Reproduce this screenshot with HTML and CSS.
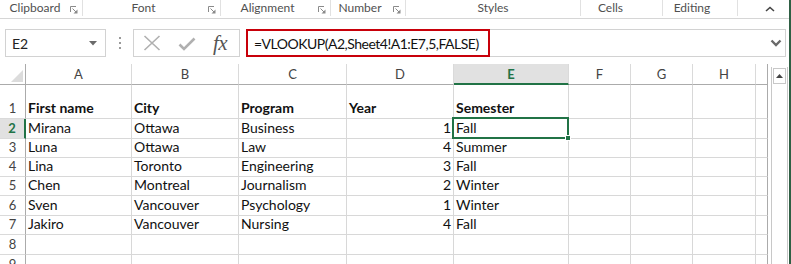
FILE: index.html
```html
<!DOCTYPE html>
<html>
<head>
<meta charset="utf-8">
<link rel="stylesheet" href="styles.css">
</head>
<body>
<div class="app">
  <div class="main">
    <div class="ribbon">
      <div class="grp g-clip"><span class="lbl">Clipboard</span><span class="launch"><svg width="8" height="8" viewBox="0 0 8 8"><path d="M0.5 6V0.5H6" fill="none" stroke="#8a8a8a"/><path d="M2.5 2.5L6 6" stroke="#8a8a8a"/><path d="M7.5 3.5V7.5H3.5Z" fill="#8a8a8a"/></svg></span></div>
      <div class="grp g-font"><span class="lbl">Font</span><span class="launch"><svg width="8" height="8" viewBox="0 0 8 8"><path d="M0.5 6V0.5H6" fill="none" stroke="#8a8a8a"/><path d="M2.5 2.5L6 6" stroke="#8a8a8a"/><path d="M7.5 3.5V7.5H3.5Z" fill="#8a8a8a"/></svg></span></div>
      <div class="grp g-align"><span class="lbl">Alignment</span><span class="launch"><svg width="8" height="8" viewBox="0 0 8 8"><path d="M0.5 6V0.5H6" fill="none" stroke="#8a8a8a"/><path d="M2.5 2.5L6 6" stroke="#8a8a8a"/><path d="M7.5 3.5V7.5H3.5Z" fill="#8a8a8a"/></svg></span></div>
      <div class="grp g-num"><span class="lbl">Number</span><span class="launch"><svg width="8" height="8" viewBox="0 0 8 8"><path d="M0.5 6V0.5H6" fill="none" stroke="#8a8a8a"/><path d="M2.5 2.5L6 6" stroke="#8a8a8a"/><path d="M7.5 3.5V7.5H3.5Z" fill="#8a8a8a"/></svg></span></div>
      <div class="grp g-styles"><span class="lbl">Styles</span></div>
      <div class="grp g-cells"><span class="lbl">Cells</span></div>
      <div class="grp g-edit"><span class="lbl">Editing</span></div>
      <div class="grp g-rest"><svg class="caret" width="10" height="6" viewBox="0 0 10 6"><path d="M1 5L5 1.5L9 5" fill="none" stroke="#444" stroke-width="1.6"/></svg></div>
    </div>

    <div class="fbar">
      <div class="namebox"><span class="nb-text">E2</span><svg class="nb-arrow" width="8" height="5" viewBox="0 0 8 5"><path d="M0 0H8L4 4.5Z" fill="#6a6a6a"/></svg></div>
      <div class="dots"><i></i><i></i><i></i></div>
      <div class="btns">
        <svg class="ic-x" width="18" height="16" viewBox="0 0 18 16"><path d="M1.5 1L16.5 15M16.5 1L1.5 15" stroke="#b0b0b0" stroke-width="1.6" fill="none"/></svg>
        <svg class="ic-ok" width="18" height="14" viewBox="0 0 18 14"><path d="M1.5 7.5L6 12L16.5 1.5" stroke="#b0b0b0" stroke-width="2.6" fill="none"/></svg>
        <span class="fx">fx</span>
      </div>
      <div class="finput">
        <div class="formula">=VLOOKUP(A2,Sheet4!A1:E7,5,FALSE)</div>
        <svg class="chev" width="12" height="8" viewBox="0 0 12 8"><path d="M1.5 1.5L6 6L10.5 1.5" fill="none" stroke="#6a6a6a" stroke-width="2.4"/></svg>
      </div>
    </div>

    <div class="sheet">
      <div class="grid">
        <div class="corner"><svg width="12" height="12" viewBox="0 0 12 12"><path d="M12 0V12H0Z" fill="#dcdcdc"/></svg></div>
        <div class="ch">A</div><div class="ch">B</div><div class="ch">C</div><div class="ch">D</div><div class="ch sel">E</div><div class="ch">F</div><div class="ch">G</div><div class="ch">H</div><div class="ch last"></div>

        <div class="rh">1</div><div class="c b">First name</div><div class="c b">City</div><div class="c b">Program</div><div class="c b">Year</div><div class="c b">Semester</div><div class="c"></div><div class="c"></div><div class="c"></div><div class="c"></div>

        <div class="rh sel">2</div><div class="c">Mirana</div><div class="c">Ottawa</div><div class="c">Business</div><div class="c n">1</div><div class="c active">Fall<span class="selbox"><span class="handle"></span></span></div><div class="c"></div><div class="c"></div><div class="c"></div><div class="c"></div>

        <div class="rh">3</div><div class="c">Luna</div><div class="c">Ottawa</div><div class="c">Law</div><div class="c n">4</div><div class="c">Summer</div><div class="c"></div><div class="c"></div><div class="c"></div><div class="c"></div>

        <div class="rh">4</div><div class="c">Lina</div><div class="c">Toronto</div><div class="c">Engineering</div><div class="c n">3</div><div class="c">Fall</div><div class="c"></div><div class="c"></div><div class="c"></div><div class="c"></div>

        <div class="rh">5</div><div class="c">Chen</div><div class="c">Montreal</div><div class="c">Journalism</div><div class="c n">2</div><div class="c">Winter</div><div class="c"></div><div class="c"></div><div class="c"></div><div class="c"></div>

        <div class="rh">6</div><div class="c">Sven</div><div class="c">Vancouver</div><div class="c">Psychology</div><div class="c n">1</div><div class="c">Winter</div><div class="c"></div><div class="c"></div><div class="c"></div><div class="c"></div>

        <div class="rh">7</div><div class="c">Jakiro</div><div class="c">Vancouver</div><div class="c">Nursing</div><div class="c n">4</div><div class="c">Fall</div><div class="c"></div><div class="c"></div><div class="c"></div><div class="c"></div>

        <div class="rh">8</div><div class="c"></div><div class="c"></div><div class="c"></div><div class="c"></div><div class="c"></div><div class="c"></div><div class="c"></div><div class="c"></div><div class="c"></div>

        <div class="rh">9</div><div class="c"></div><div class="c"></div><div class="c"></div><div class="c"></div><div class="c"></div><div class="c"></div><div class="c"></div><div class="c"></div><div class="c"></div>
      </div>
      <div class="vscroll">
        <div class="vs-track">
          <div class="vs-up"><svg width="7" height="4" viewBox="0 0 7 4"><path d="M0 4L3.5 0L7 4Z" fill="#444"/></svg></div>
        </div>
      </div>
    </div>
  </div>
  <div class="edge"></div>
</div>
</body>
</html>
```

FILE: styles.css
```css
* { box-sizing: border-box; }
html, body { margin: 0; padding: 0; background: #fff; }
body { width: 791px; height: 264px; overflow: hidden; font-family: Lato, "Open Sans", sans-serif; }

.app { display: flex; width: 791px; height: 264px; }
.main { width: 789px; display: flex; flex-direction: column; }
.edge { width: 2px; background: #2f5f44; }

/* ribbon group labels */
.ribbon { display: flex; height: 19px; border-bottom: 1px solid #d6d6d6; }
.grp { display: flex; height: 16px; border-right: 1px solid #e1e1e1; align-items: flex-start; }
.lbl { flex: 1; text-align: center; font-size: 12px; line-height: 16px; color: #505050; }
.launch { width: 16px; height: 16px; display: flex; align-items: center; justify-content: center; padding-top: 3px; }
.g-clip { width: 83px; padding-left: 4px; }
.g-font { width: 138px; }
.g-align { width: 110px; }
.g-num { width: 75px; }
.g-styles { width: 175px; }
.g-cells { width: 82px; padding-right: 22px; }
.g-edit { width: 75px; padding-right: 16px; }
.g-rest { flex: 1; border-right: none; justify-content: flex-end; padding-right: 14px; }
.caret { margin-top: 6px; }

/* formula bar */
.fbar { display: flex; align-items: stretch; height: 28px; margin-top: 10px; padding-left: 5px; }
.namebox { width: 101px; border: 1px solid #d2d2d2; display: flex; align-items: center; justify-content: space-between; padding: 0 8px 0 6px; }
.nb-text { font-size: 14px; color: #222; }
.nb-arrow { margin-top: 1px; }
.dots { width: 27px; display: flex; flex-direction: column; align-items: center; justify-content: center; gap: 3px; }
.dots i { display: block; width: 2px; height: 2px; background: #9a9a9a; }
.btns { width: 107px; border: 1px solid #d2d2d2; display: flex; align-items: center; padding-left: 9px; }
.ic-x { margin-right: 17px; }
.ic-ok { margin-right: 17px; margin-top: 1px; }
.fx { font-family: "Liberation Serif", serif; font-style: italic; font-size: 21px; color: #555; letter-spacing: -0.5px; line-height: 20px; }
.finput { width: 540px; margin-left: 6px; border: 1px solid #d2d2d2; display: flex; align-items: stretch; justify-content: space-between; }
.formula { width: 244px; margin: -1px 0 -1px -1px; border: 2px solid #c8000a; font-size: 14px; letter-spacing: -0.5px; color: #111; padding-left: 6px; display: flex; align-items: center; }
.chev { align-self: center; margin-right: 3px; }

/* sheet */
.sheet { display: flex; margin-top: 7px; flex: 1; min-height: 0; }
.grid {
  width: 768px;
  display: grid;
  grid-template-columns: 26px 106px 107px 108px 107px 115px 62px 62px 63px 12px;
  grid-template-rows: 21px 34px 20px 19px 19px 19px 20px 19px 20px 20px;
  align-content: start;
}
.corner { border-right: 1px solid #ababab; border-bottom: 1px solid #ababab; display: flex; align-items: flex-end; justify-content: flex-end; padding: 0 2px 2px 0; }
.ch { border-right: 1px solid #dadada; border-bottom: 1px solid #ababab; font-size: 13px; color: #444; text-align: center; line-height: 20px; }
.ch.last { border-right: 1px solid #ababab; }
.ch.sel { background: #e1e1e1; border-bottom: 2px solid #217346; color: #217346; font-weight: 700; }
.rh { border-right: 1px solid #ababab; border-bottom: 1px solid #dadada; font-size: 13px; color: #444; display: flex; align-items: flex-end; justify-content: center; padding-bottom: 2px; line-height: 16px; }
.rh.sel { background: #e1e1e1; color: #217346; font-weight: 700; border-right: 2px solid #217346; }
.c { border-right: 1px solid #d8d8d8; border-bottom: 1px solid #d8d8d8; font-size: 14px; line-height: 17px; color: #111; display: flex; align-items: flex-end; padding: 0 2px 2px 2px; white-space: nowrap; overflow: hidden; }
.c:nth-child(10n) { border-right-color: #ababab; }
.c.b { font-weight: 700; }
.c.n { justify-content: flex-end; }
.c.active { position: relative; overflow: visible; }
.selbox { position: absolute; left: -2px; top: -2px; right: -1px; bottom: -1px; border: 2px solid #217346; }
.handle { position: absolute; right: -4px; bottom: -4px; width: 6px; height: 6px; background: #217346; border: 1px solid #fff; }

/* scrollbar */
.vscroll { width: 21px; padding: 3px 1px 0 3px; }
.vs-track { height: 100%; border-left: 1px solid #c8c8c8; border-right: 1px solid #c8c8c8; padding-top: 1px; }
.vs-up { height: 16px; border: 1px solid #c8c8c8; margin: 0 1px; display: flex; align-items: center; justify-content: center; }
```
